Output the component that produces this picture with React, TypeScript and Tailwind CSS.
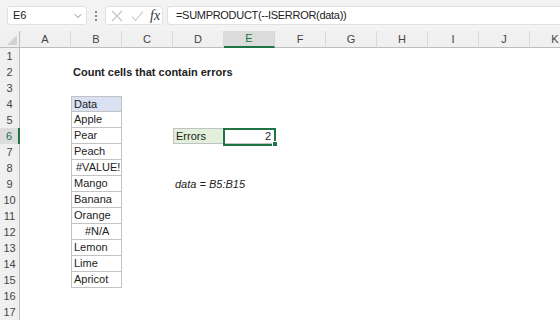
import React from 'react';
import { ChevronDown } from 'lucide-react';

const cols = ['A', 'B', 'C', 'D', 'E', 'F', 'G', 'H', 'I', 'J', 'K'];
const rows = Array.from({ length: 17 }, (_, i) => i + 1);

const fruit: Record<number, { text: string; indent?: string }> = {
  4: { text: 'Data' },
  5: { text: 'Apple' },
  6: { text: 'Pear' },
  7: { text: 'Peach' },
  8: { text: '#VALUE!', indent: 'pl-[4px]' },
  9: { text: 'Mango' },
  10: { text: 'Banana' },
  11: { text: 'Orange' },
  12: { text: '#N/A', indent: 'pl-[13px]' },
  13: { text: 'Lemon' },
  14: { text: 'Lime' },
  15: { text: 'Apricot' },
};

function Cell({ row, col }: { row: number; col: string }) {
  if (col === 'B' && fruit[row]) {
    const f = fruit[row];
    return (
      <div
        className={`h-4 overflow-hidden whitespace-nowrap border-x border-b border-[#c3c3c3] pl-[2px] leading-[15px] ${row === 4 ? 'border-t bg-[#d9e1f2]' : ''} ${f.indent || ''}`}
      >
        {f.text}
      </div>
    );
  }
  if (row === 2 && col === 'B') {
    return <div className="h-4 pl-[2px] leading-4 font-bold whitespace-nowrap">Count cells that contain errors</div>;
  }
  if (row === 6 && col === 'D') {
    return <div className="h-4 border border-[#c3c3c3] bg-[#e2efda] pl-[2px] leading-[14px]">Errors</div>;
  }
  if (row === 6 && col === 'E') {
    return (
      <div className="relative h-4 border-y border-r border-[#c3c3c3] pr-[3px] text-right leading-[14px]">
        2
        <div className="absolute -left-[1px] -top-[1px] h-[18px] w-[53px] border-2 border-[#217346]" />
        <div className="absolute -bottom-[4px] -right-[4px] h-[6px] w-[6px] border border-white bg-[#217346]" />
      </div>
    );
  }
  if (row === 9 && col === 'D') {
    return <div className="h-4 pl-[2px] leading-4 italic whitespace-nowrap">data = B5:B15</div>;
  }
  return <div className="h-4" />;
}

export default function App() {
  return (
    <div className="h-[320px] w-[560px] overflow-hidden bg-white text-[11px] text-[#222] font-['Liberation_Sans',Arial,sans-serif]">
      {/* formula bar */}
      <div className="flex h-[31px] items-center bg-[#f3f3f3] pl-[7px]">
        <div className="flex h-[19px] w-[80px] items-center justify-between rounded-[3px] border border-[#e1e1e1] bg-white pl-[5px] pr-[2px] text-[11px]">
          <span>E6</span>
          <ChevronDown className="h-3 w-3 text-[#666]" strokeWidth={1.5} />
        </div>
        <div className="flex w-[18px] flex-col items-center gap-[2px]">
          <span className="h-[2px] w-[2px] bg-[#888]" />
          <span className="h-[2px] w-[2px] bg-[#888]" />
          <span className="h-[2px] w-[2px] bg-[#888]" />
        </div>
        <div className="flex h-[19px] w-[58px] items-center rounded-[3px] border border-[#e1e1e1] bg-white pl-[5px]">
          <svg width="12" height="12" viewBox="0 0 12 12" className="mr-[8px]">
            <path d="M1 1 L11 11 M11 1 L1 11" stroke="#c4c4c4" strokeWidth="1.1" fill="none" />
          </svg>
          <svg width="13" height="12" viewBox="0 0 13 12" className="mr-[6px]">
            <path d="M1 6.5 L4.5 10.5 L12 1.5" stroke="#c4c4c4" strokeWidth="1.1" fill="none" />
          </svg>
          <span className="font-['Liberation_Serif',serif] text-[14px] italic leading-none text-[#333]">fx</span>
        </div>
        <div className="ml-[4px] flex h-[19px] flex-1 items-center rounded-l-[3px] border border-r-0 border-[#e1e1e1] bg-white pl-[8px] text-[11px] tracking-[-0.3px]">
          =SUMPRODUCT(--ISERROR(data))
        </div>
      </div>

      {/* grid */}
      <div className="grid grid-cols-[20px_repeat(11,51px)]">
        <div className="relative h-[17px] border-b border-r border-[#bdbdbd] bg-[#f0f0f0]">
          <div className="absolute bottom-[2px] right-[2px] h-0 w-0 border-b-[10px] border-l-[10px] border-b-[#d2d2d2] border-l-transparent" />
        </div>
        {cols.map((c) => (
          <div
            key={c}
            className={`flex h-[17px] items-center justify-center border-r ${c === 'E' ? 'border-b-2 border-b-[#217346] border-r-[#d4d4d4] bg-[#dcdcdc] text-[#217346]' : 'border-b border-b-[#bdbdbd] border-r-[#dadada] bg-[#f0f0f0] text-[#444]'}`}
          >
            {c}
          </div>
        ))}
        {rows.map((r) => (
          <React.Fragment key={r}>
            <div
              className={`flex h-4 items-center justify-center ${r === 6 ? 'border-r-2 border-[#217346] bg-[#dcdcdc] text-[#217346]' : 'border-r border-[#bdbdbd] bg-[#f0f0f0] text-[#444]'}`}
            >
              {r}
            </div>
            {cols.map((c) => (
              <Cell key={c} row={r} col={c} />
            ))}
          </React.Fragment>
        ))}
      </div>
    </div>
  );
}
